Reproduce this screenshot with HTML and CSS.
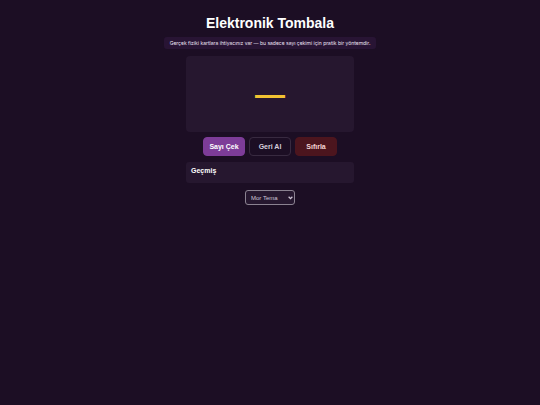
FILE: index.html
```html
<!DOCTYPE html>
<html lang="tr">
<head>
    <meta charset="UTF-8">
    <meta name="viewport" content="width=device-width, initial-scale=1.0">
    <title>Elektronik Tombala</title>
    <link rel="stylesheet" href="styles.css">
</head>
<body>

    <h1>Elektronik Tombala</h1>
    <p class="note">Gerçek fiziki kartlara ihtiyacınız var — bu sadece sayı çekimi için pratik bir yöntemdir.</p>

    <main class="container">
        <div class="display">—</div>

        <div class="buttons">
            <button type="button" class="btn btn-draw">Sayı Çek</button>
            <button type="button" class="btn btn-undo">Geri Al</button>
            <button type="button" class="btn btn-reset">Sıfırla</button>
        </div>

        <section class="history">
            <h2>Geçmiş</h2>
        </section>
    </main>

    <div class="theme">
        <select class="theme-select" aria-label="Tema">
            <option selected>Mor Tema</option>
        </select>
        <svg class="theme-arrow" viewBox="0 0 8 6" aria-hidden="true">
            <path d="M1 1l3 3 3-3" fill="none" stroke="currentColor" stroke-width="2"/>
        </svg>
    </div>

</body>
</html>
```

FILE: styles.css
```css
* {
    box-sizing: border-box;
}

body {
    display: flex;
    flex-direction: column;
    align-items: center;
    min-height: 100vh;
    margin: 0;
    padding: 15px 8px;
    font-family: "Liberation Sans", Arial, sans-serif;
    color: #fff;
    background: #1c0e24;
}

h1 {
    margin: 0 0 5px;
    font-size: 14px;
    line-height: 17px;
}

.note {
    margin: 0 0 7px;
    padding: 2px 6px;
    font-family: Inter, "Liberation Sans", sans-serif;
    font-size: 5px;
    line-height: 8px;
    text-align: center;
    color: #eee4f4;
    background: #281434;
    border-radius: 3px;
}

.container {
    width: 100%;
    max-width: 168px;
}

.display {
    display: flex;
    justify-content: center;
    align-items: center;
    height: 76px;
    padding-top: 2px;
    font-size: 30px;
    font-weight: bold;
    color: #f1c232;
    background: #26172f;
    border-radius: 4px;
}

.buttons {
    display: flex;
    justify-content: center;
    gap: 4px;
    margin: 5px 0 6px;
}

.btn {
    width: 42px;
    height: 19px;
    padding: 0;
    font-family: inherit;
    font-size: 7px;
    font-weight: bold;
    border: 1px solid transparent;
    border-radius: 4px;
    cursor: pointer;
}

.btn-draw {
    color: #fff;
    background: #7d3c98;
    border-color: #7d3c98;
}

.btn-undo {
    color: #d8cfdd;
    background: transparent;
    border-color: #382a40;
}

.btn-reset {
    color: #f5d5d5;
    background: #4c151e;
    border-color: #4c151e;
}

.history {
    min-height: 21px;
    padding: 5px;
    background: #26172f;
    border-radius: 3px;
}

.history h2 {
    margin: 0;
    font-size: 7px;
    line-height: 8px;
}

.theme {
    position: relative;
    margin-top: 7px;
    color: #cfc6d6;
}

.theme-select {
    display: block;
    width: 50px;
    height: 15px;
    padding: 0 5px;
    appearance: none;
    font-family: inherit;
    font-size: 6px;
    color: inherit;
    background: #26172f;
    border: 1px solid #8b8291;
    border-radius: 3px;
}

/* Ok simgesi seçim kutusunun üstünde durur */
.theme-arrow {
    position: absolute;
    top: 6px;
    right: 2px;
    width: 5px;
    height: 4px;
    pointer-events: none;
}
```
